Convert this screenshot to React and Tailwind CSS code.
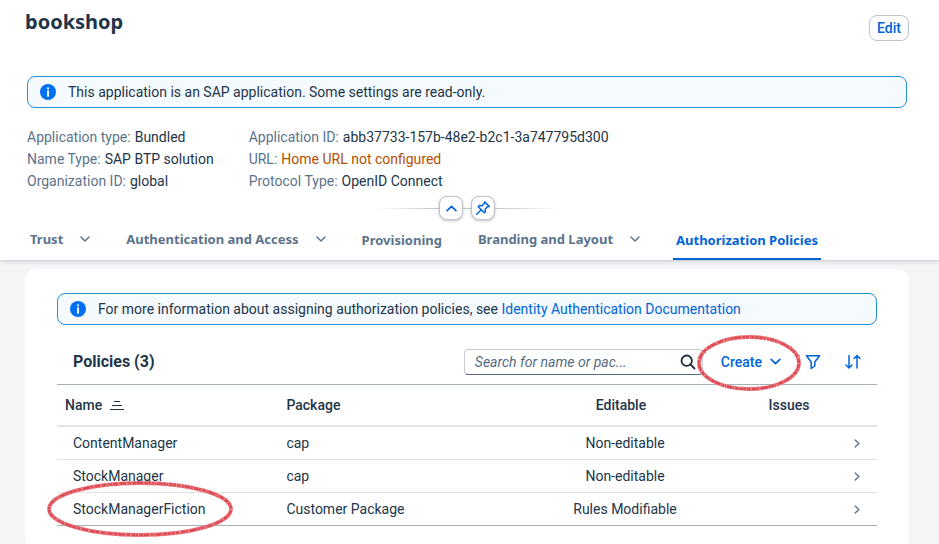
import React from 'react';

const POLICIES = [
  { name: 'ContentManager', pkg: 'cap', editable: 'Non-editable' },
  { name: 'StockManager', pkg: 'cap', editable: 'Non-editable' },
  { name: 'StockManagerFiction', pkg: 'Customer Package', editable: 'Rules Modifiable', marked: true },
];

const TABS = [
  { label: 'Trust', menu: true },
  { label: 'Authentication and Access', menu: true },
  { label: 'Provisioning' },
  { label: 'Branding and Layout', menu: true },
  { label: 'Authorization Policies', active: true },
];

const DETAILS = [
  [
    ['Application type:', 'Bundled'],
    ['Name Type:', 'SAP BTP solution'],
    ['Organization ID:', 'global'],
  ],
  [
    ['Application ID:', 'abb37733-157b-48e2-b2c1-3a747795d300'],
    ['URL:', 'Home URL not configured', true],
    ['Protocol Type:', 'OpenID Connect'],
  ],
];

function Chevron({ className, d = 'M1 1l4 4 4-4', box = '0 0 10 6' }) {
  return (
    <svg viewBox={box} className={className} fill="none" stroke="currentColor" strokeWidth="1.5" strokeLinecap="round" strokeLinejoin="round" aria-hidden="true">
      <path d={d} />
    </svg>
  );
}

function InfoIcon() {
  return (
    <svg viewBox="0 0 16 16" className="size-4 shrink-0" aria-hidden="true">
      <circle cx="8" cy="8" r="8" fill="#0070f2" />
      <circle cx="8" cy="4.3" r="1.1" fill="#fff" />
      <rect x="7.1" y="6.3" width="1.9" height="6.4" rx="0.4" fill="#fff" />
    </svg>
  );
}

function Banner({ children }) {
  return (
    <div className="flex h-8 items-center gap-3 rounded-lg border border-[#2390d8] bg-[#f4fafe] px-3">
      <InfoIcon />
      <p>{children}</p>
    </div>
  );
}

// Hand-drawn crayon ellipse laid over the item it points out.
function Marker({ className, w, h, id }) {
  const shape = { cx: w / 2, cy: h / 2, rx: w / 2 - 2, ry: h / 2 - 2, fill: 'none' };
  return (
    <svg viewBox={`0 0 ${w} ${h}`} className={className} aria-hidden="true">
      <filter id={id} x="-5%" y="-10%" width="110%" height="120%">
        <feTurbulence type="fractalNoise" baseFrequency="0.45" numOctaves="2" seed="4" />
        <feDisplacementMap in="SourceGraphic" scale="1.6" xChannelSelector="R" yChannelSelector="G" />
      </filter>
      <g filter={`url(#${id})`}>
        <ellipse {...shape} stroke="#e8747b" strokeWidth="3.8" />
        <ellipse {...shape} stroke="#dc4a54" strokeWidth="2.2" strokeDasharray="5 1 7 1 3 1" />
        <ellipse {...shape} stroke="#efa0a4" strokeWidth="1.8" strokeDasharray="1 7 1 4 1 11" />
      </g>
    </svg>
  );
}

export default function App() {
  return (
    <div className="min-h-screen overflow-hidden bg-[#f4f5f7] font-['Roboto','Liberation_Sans',sans-serif] text-sm leading-[22px] text-[#223548]">
      <header className="relative border-b border-[#d2d4d6] bg-white shadow-[0_1px_4px_rgba(34,53,72,0.14)]">
        <div className="flex items-start justify-between pr-[30px] pl-[25px]">
          <h1 className="pt-2 font-['Noto_Sans',sans-serif] text-xl leading-7 font-bold">bookshop</h1>
          <button className="mt-[15px] h-[26px] rounded-lg border border-[#bcc3ca] px-[7px] leading-5 font-medium text-[#0064d9]">Edit</button>
        </div>
        <div className="mt-[35px] pr-8 pl-[27px]">
          <Banner>This application is an SAP application. Some settings are read-only.</Banner>
          <div className="mt-[18px] flex gap-[35px]">
            {DETAILS.map((group, i) => (
              <dl key={i}>
                {group.map(([label, value, warn]) => (
                  <div key={label} className="flex gap-1">
                    <dt className="text-[#5b738b]">{label}</dt>
                    <dd className={warn ? 'text-[#b44f00]' : ''}>{value}</dd>
                  </div>
                ))}
              </dl>
            ))}
          </div>
        </div>
        <div className="mt-1 flex items-center justify-center pr-[30px] pl-[25px]">
          <span className="h-px w-16 bg-gradient-to-r from-transparent to-[#bcc3ca]" />
          <button aria-label="Collapse header" className="flex size-6 items-center justify-center rounded-lg border border-[#bcc3ca] bg-white text-[#0064d9] shadow-[0_1px_3px_rgba(34,53,72,0.3)]">
            <Chevron className="h-[7px] w-[11px]" d="M1 5l4-4 4 4" />
          </button>
          <span className="h-px w-2 bg-[#bcc3ca]" />
          <button aria-label="Pin header" className="flex size-6 items-center justify-center rounded-lg border border-[#bcc3ca] bg-white text-[#0064d9] shadow-[0_1px_3px_rgba(34,53,72,0.3)]">
            <svg viewBox="0 0 16 16" className="size-4" fill="none" stroke="currentColor" strokeWidth="1.5" strokeLinejoin="round" strokeLinecap="round" aria-hidden="true">
              <path d="M9.6 1.8l4.6 4.6-1.7.3-2.3 2.3.2 2.7-1.1 1.1L3.2 6.700l1.100-1.100 2.700.2L9.300 3.500z M6.200 9.800L1.800 14.200" />
            </svg>
          </button>
          <span className="h-px w-16 bg-gradient-to-l from-transparent to-[#bcc3ca]" />
        </div>
        <nav className="flex h-10 gap-[30px] pl-[27px] font-['Noto_Sans',sans-serif] text-[13px] font-bold">
          {TABS.map((tab) => (
            <button
              key={tab.label}
              aria-current={tab.active ? 'page' : undefined}
              className={
                tab.active
                  ? 'flex items-center border-b-2 border-[#0064d9] px-[3px] pt-0.5 text-[#0064d9]'
                  : tab.menu
                    ? 'flex items-center gap-[17px] border-b-2 border-transparent px-[3px] text-[#5b738b]'
                    : 'flex items-center border-b-2 border-transparent px-[3px] pt-0.5 text-[#5b738b]'
              }
            >
              {tab.label}
              {tab.menu && <Chevron className="h-[6px] w-[10px]" />}
            </button>
          ))}
        </nav>
      </header>

      <main className="mt-2 mr-[30px] ml-[25px] rounded-xl bg-white px-8 pt-6 pb-6">
        <Banner>
          For more information about assigning authorization policies, see{' '}
          <a href="#docs" className="text-[#0064d9]">Identity Authentication Documentation</a>
        </Banner>

        <div className="mt-4 flex h-11 items-center border-b border-[#a8b0b8] pr-4 pb-0.5 pl-4">
          <h2 className="flex-1 text-base font-bold">Policies (3)</h2>
          <div className="flex h-[26px] w-[239px] items-center rounded border border-[#c8cdd2] border-b-[#556b82] pr-1.5 pl-2.5">
            <input type="text" aria-label="Search policies" placeholder="Search for name or pac..." className="h-6 min-w-0 flex-1 leading-6 outline-none placeholder:text-[#556b82] placeholder:italic" />
            <svg viewBox="0 0 16 16" className="size-4" fill="none" stroke="#1d2d3e" strokeWidth="1.8" strokeLinecap="round" aria-hidden="true">
              <circle cx="6.7" cy="6.7" r="5.2" />
              <path d="M10.6 10.6L14.5 14.5" />
            </svg>
          </div>
          <button className="relative ml-[18px] flex items-center gap-2 font-medium text-[#0064d9]">
            Create
            <Chevron className="h-[7px] w-[11px]" />
            <Marker id="mark-create" w={104} h={56} className="pointer-events-none absolute -top-4 -left-6 h-14 w-[104px] max-w-none overflow-visible" />
          </button>
          <button aria-label="Filter" className="ml-6 text-[#0064d9]">
            <svg viewBox="0 0 16 16" className="size-4" fill="none" stroke="currentColor" strokeWidth="1.5" strokeLinejoin="round" aria-hidden="true">
              <path d="M1.5 1.8h13L9.8 8v4l-3.6 2.5V8z" />
            </svg>
          </button>
          <button aria-label="Sort" className="ml-6 text-[#0064d9]">
            <svg viewBox="0 0 16 16" className="size-4" fill="none" stroke="currentColor" strokeWidth="1.5" strokeLinejoin="round" strokeLinecap="round" aria-hidden="true">
              <path d="M4 1.5v12.5M1 11l3 3 3-3M12 14V1.5M9 4.500l3-3 3 3" />
            </svg>
          </button>
        </div>

        <table className="w-full table-fixed border-separate border-spacing-0">
          <thead>
            <tr className="h-[42px] [&>th]:border-b-2 [&>th]:border-[#e3e4e6] [&>th]:font-medium">
              <th className="w-[27%] pl-2 text-left">
                <span className="flex items-center gap-2">
                  Name
                  <svg viewBox="0 0 14 9" className="h-[9px] w-[14px]" fill="currentColor" shapeRendering="crispEdges" aria-hidden="true">
                    <path d="M4 0h6v1H4zM2 4h10v1H2zM0 8h14v1H0z" />
                  </svg>
                </span>
              </th>
              <th className="pl-2 text-left">Package</th>
              <th className="w-[232px] pr-2 text-center">Editable</th>
              <th className="w-24 text-center">Issues</th>
              <th className="w-10" aria-label="Open" />
            </tr>
          </thead>
          <tbody>
            {POLICIES.map((p) => (
              <tr key={p.name} className="h-[33px] [&>td]:border-b [&>td]:border-[#e0e1e3] last:[&>td]:border-[#a8b0b8]">
                <td className="pl-4">
                  <span className="relative">
                    {p.name}
                    {p.marked && <Marker id="mark-policy" w={186} h={56} className="pointer-events-none absolute -top-5 -left-[26px] h-14 w-[186px] max-w-none overflow-visible" />}
                  </span>
                </td>
                <td className="pl-2">{p.pkg}</td>
                <td className="text-center">{p.editable}</td>
                <td />
                <td className="text-[#5b738b]">
                  <Chevron className="mx-auto h-[9px] w-[6px]" box="0 0 6 10" d="M1 1l4 4-4 4" />
                </td>
              </tr>
            ))}
          </tbody>
        </table>
      </main>
    </div>
  );
}
